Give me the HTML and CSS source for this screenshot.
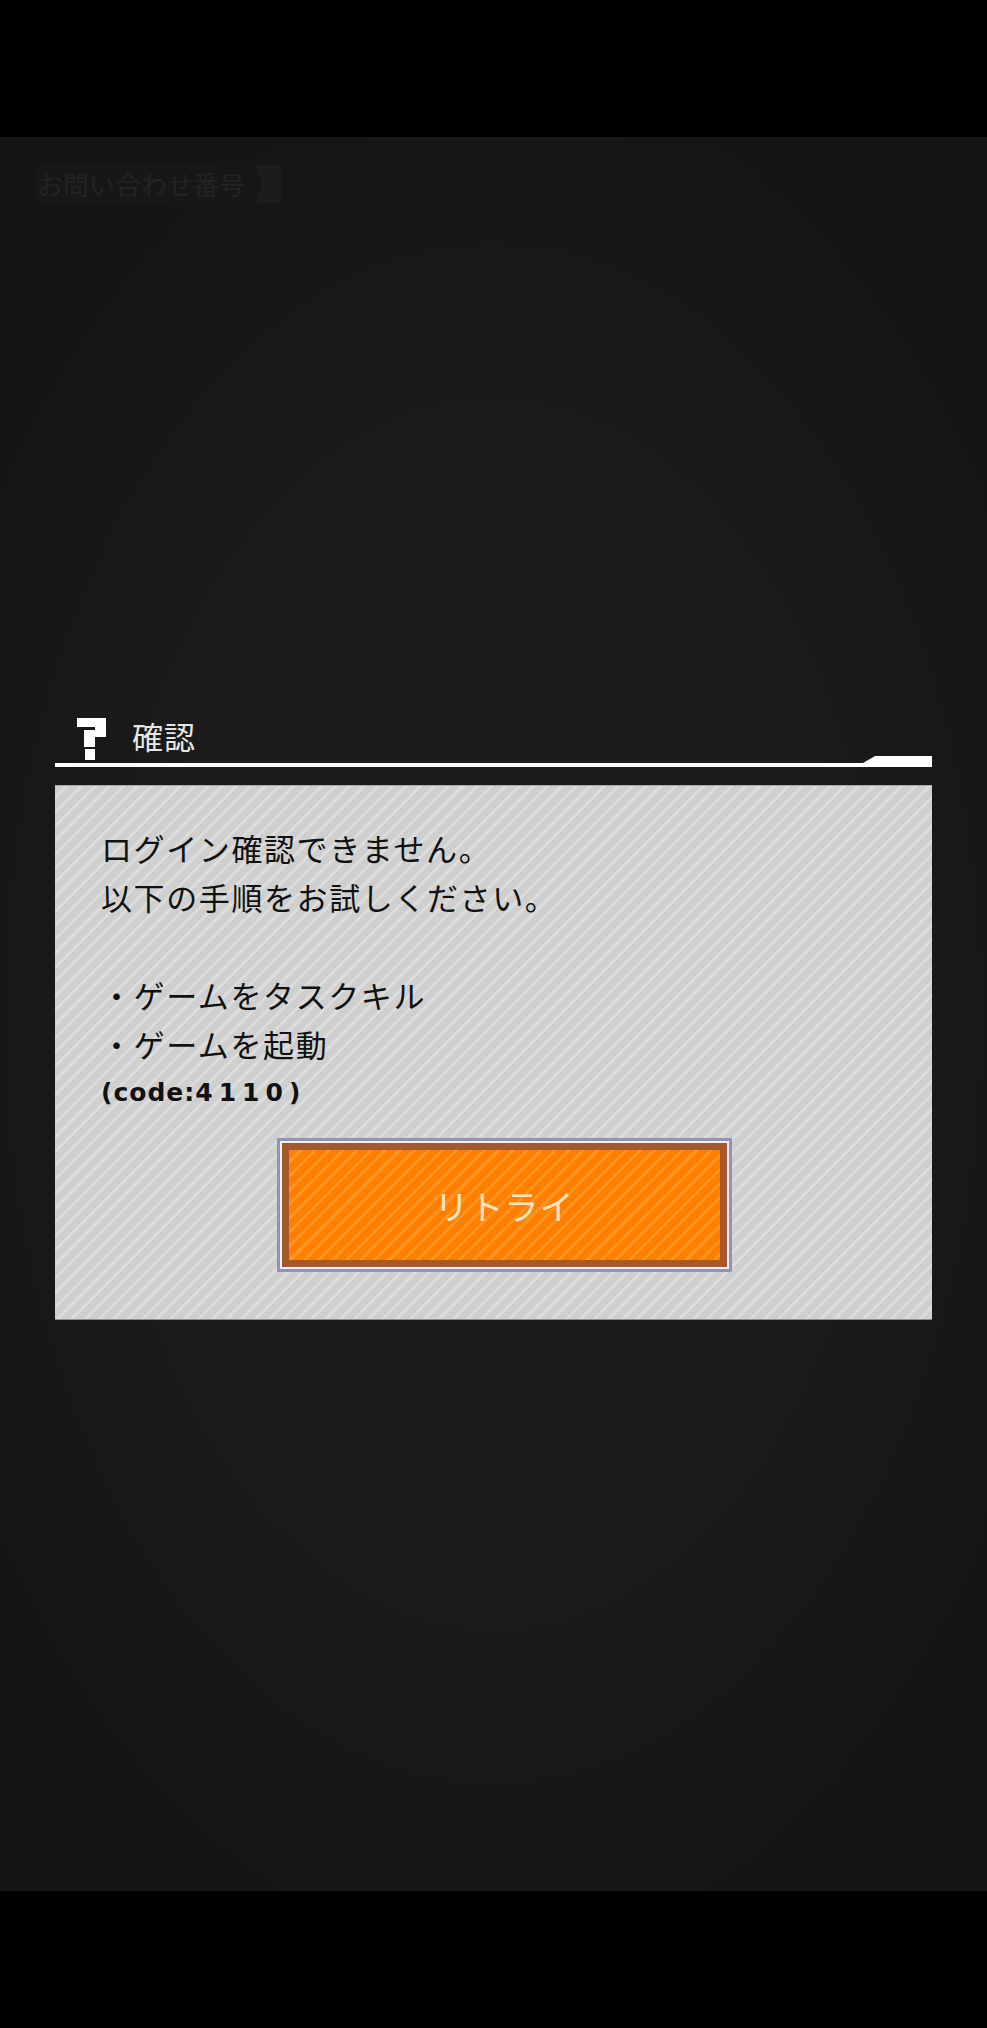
FILE: index.html
```html
<!DOCTYPE html>
<html lang="ja">
<head>
<meta charset="utf-8">
<title>確認</title>
<link rel="stylesheet" href="styles.css">
</head>
<body>
<div class="bar"></div>
<main class="stage">
  <div class="inquiry">
    <span class="inquiry-label">お問い合わせ番号</span>
    <span class="inquiry-tab"></span>
  </div>
  <section class="dialog">
    <header class="dialog-head">
      <svg class="q-icon" width="29" height="42" viewBox="0 0 29 42" aria-hidden="true">
        <path fill="#fff" d="M0 0H29V19H18V29H7V12H18V9H0Z"/>
        <rect fill="#fff" x="8" y="31" width="10" height="11"/>
      </svg>
      <h1 class="dialog-title">確認</h1>
    </header>
    <div class="rule">
      <svg class="rule-svg" width="877" height="12" viewBox="0 0 877 12" aria-hidden="true">
        <path fill="#fff" d="M0 7H808L820 0H877V11H0Z"/>
      </svg>
    </div>
    <div class="panel">
      <p class="line">ログイン確認できません。</p>
      <p class="line">以下の手順をお試しください。</p>
      <p class="line">&nbsp;</p>
      <p class="line">・ゲームをタスクキル</p>
      <p class="line">・ゲームを起動</p>
      <p class="line code">(code:<span class="digits">4110</span>)</p>
      <div class="actions">
        <button class="retry" type="button"><span class="retry-text">リトライ</span></button>
      </div>
    </div>
  </section>
</main>
<div class="bar"></div>
</body>
</html>
```
FILE: styles.css
```css
* { box-sizing: border-box; }
html, body { margin: 0; padding: 0; height: 100%; }
body {
  width: 987px;
  height: 2028px;
  background: #000;
  display: flex;
  flex-direction: column;
  font-family: "Noto Sans CJK JP", "Noto Sans", sans-serif;
  overflow: hidden;
}
.bar { height: 137px; flex: none; background: #000; }
.stage {
  flex: 1;
  display: flex;
  flex-direction: column;
  padding: 28px 55px 0;
  background: radial-gradient(ellipse 62% 55% at 50% 50%, #1c1c1c 0%, #1b1b1b 55%, #131516 100%);
}
.inquiry {
  display: flex;
  align-items: center;
  height: 38px;
  margin-left: -18px;
}
.inquiry-label {
  font-size: 26px;
  line-height: 38px;
  color: #232323;
  padding-right: 10px;
  background: #171717;
}
.inquiry-tab {
  width: 26px;
  height: 38px;
  background: #1b1c1c;
  clip-path: polygon(0 0, 100% 0, 100% 100%, 0 100%, 28% 50%);
}
.dialog { margin-top: 515px; }
.dialog-head {
  display: flex;
  align-items: flex-start;
  height: 38px;
  padding-left: 22px;
  gap: 26px;
}
.q-icon { flex: none; }
.dialog-title {
  margin: -3px 0 0;
  font-size: 31px;
  font-weight: 400;
  letter-spacing: 1px;
  line-height: 42px;
  color: #e6e6e6;
}
.rule { height: 12px; margin-bottom: 17px; }
.rule-svg { display: block; }
.panel {
  height: 535px;
  padding: 37px 46px 0;
  color: #111;
  border-top: 1px solid #a9a9ad;
  border-bottom: 1px solid #8d8d8d;
  background: repeating-linear-gradient(135deg, #cfcfcf 0 7px, #dcdcdc 7px 10px);
}
.line {
  margin: 0;
  font-size: 31px;
  font-weight: 400;
  letter-spacing: 1.6px;
  line-height: 49px;
  white-space: nowrap;
}
.code {
  font-family: "DejaVu Sans", sans-serif;
  font-size: 25px;
  font-weight: 700;
  letter-spacing: 1px;
}
.digits { letter-spacing: 6px; }
.actions {
  display: flex;
  margin: 26px 0 0 181px;
}
.retry {
  width: 445px;
  height: 124px;
  padding: 0;
  display: flex;
  align-items: center;
  justify-content: center;
  border: 7px solid #a5592a;
  box-shadow: 0 0 0 2px #f2eff6, 0 0 0 5px #8f93b8;
  background: repeating-linear-gradient(135deg, #ff8000 0 7px, #ff9520 7px 10px);
  font-family: inherit;
}
.retry-text {
  font-size: 34px;
  font-weight: 400;
  color: #ffe6c4;
  letter-spacing: 1px;
}
```
